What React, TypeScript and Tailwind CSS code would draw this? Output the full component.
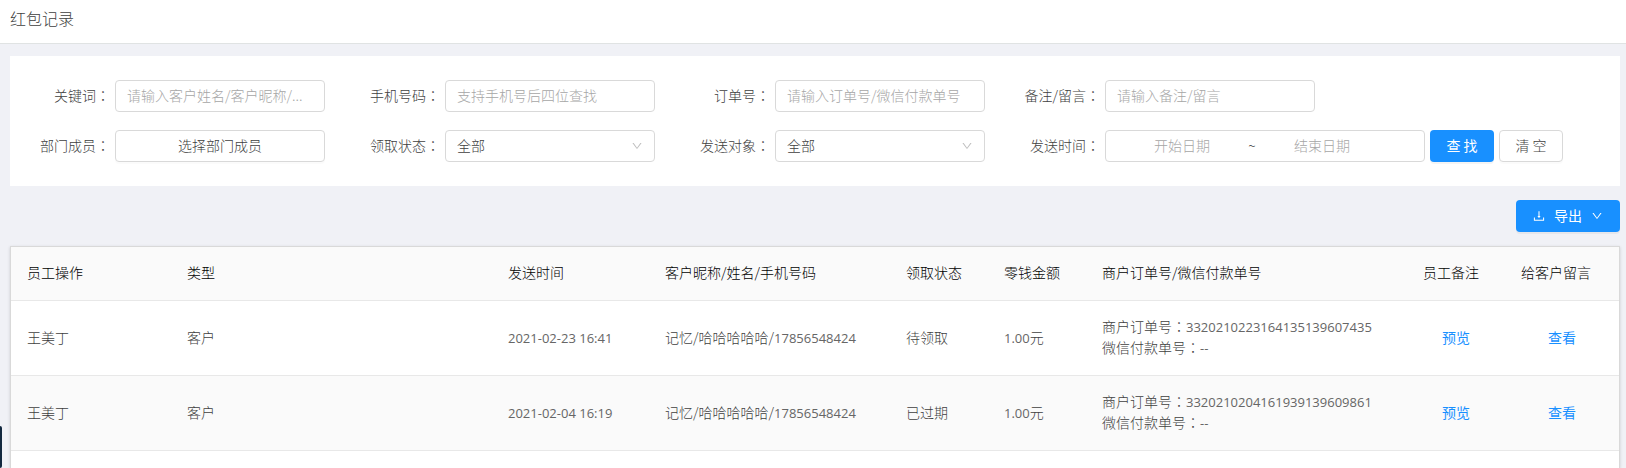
import React from "react";
import { AiOutlineDown, AiOutlineDownload } from "react-icons/ai";

const fieldBox =
  "h-8 pb-[2px] rounded border border-[#d9d9d9] bg-white text-[#404040] outline-none focus:border-[#40a9ff]";

const cell = "px-4 pt-[15px] pb-[17px]";

const records = [
  {
    staff: "王美丁",
    type: "客户",
    time: "2021-02-23 16:41",
    nickname: "记忆/哈哈哈哈哈/",
    phone: "17856548424",
    status: "待领取",
    amount: "1.00",
    orderNo: "3320210223164135139607435",
    payNo: "--",
  },
  {
    staff: "王美丁",
    type: "客户",
    time: "2021-02-04 16:19",
    nickname: "记忆/哈哈哈哈哈/",
    phone: "17856548424",
    status: "已过期",
    amount: "1.00",
    orderNo: "3320210204161939139609861",
    payNo: "--",
  },
];

const columns = [
  { title: "员工操作", width: "w-[160px]" },
  { title: "类型", width: "w-[321px]" },
  { title: "发送时间", width: "w-[157px]" },
  { title: "客户昵称/姓名/手机号码", width: "w-[241px]" },
  { title: "领取状态", width: "w-[98px]" },
  { title: "零钱金额", width: "w-[98px]" },
  { title: "商户订单号/微信付款单号", width: "w-[321px]" },
  { title: "员工备注", width: "w-[98px]" },
  { title: "给客户留言", width: "w-[114px]" },
];

// Full-width colon, centred in its em box
const Colon = () => (
  <span className="font-['Noto_Sans_CJK_TC',sans-serif] leading-none">：</span>
);

const Num = ({ children }: { children: React.ReactNode }) => (
  <span className="font-['Open_Sans',sans-serif] text-[13px] leading-none font-normal text-[#666666]">
    {children}
  </span>
);

const Field = ({
  label,
  id,
  children,
}: {
  label: string;
  id: string;
  children: React.ReactNode;
}) => (
  <div className="flex items-center">
    <label htmlFor={id} className="w-[100px] mr-[5px] pb-[2px] text-right whitespace-nowrap">
      {label}
      <Colon />
    </label>
    {children}
  </div>
);

const TextField = ({
  label,
  id,
  placeholder,
}: {
  label: string;
  id: string;
  placeholder: string;
}) => (
  <Field label={label} id={id}>
    <input
      id={id}
      type="text"
      placeholder={placeholder}
      className={`${fieldBox} w-[210px] mr-[15px] px-[11px] placeholder:text-[#a6a6a6]`}
    />
  </Field>
);

const SelectField = ({ label, id }: { label: string; id: string }) => (
  <Field label={label} id={id}>
    <div className="relative w-[210px] mr-[15px]">
      <select id={id} className={`${fieldBox} block w-full appearance-none pl-[11px] pr-8`}>
        <option>全部</option>
      </select>
      <AiOutlineDown className="absolute right-3 top-[10px] w-3 h-3 text-[#bfbfbf] pointer-events-none" />
    </div>
  </Field>
);

const Filters = () => (
  <form className="bg-white py-6 space-y-[18px]" onSubmit={(e) => e.preventDefault()}>
    <div className="flex flex-wrap gap-y-[18px]">
      <TextField label="关键词" id="keyword" placeholder="请输入客户姓名/客户昵称/..." />
      <TextField label="手机号码" id="phone" placeholder="支持手机号后四位查找" />
      <TextField label="订单号" id="order" placeholder="请输入订单号/微信付款单号" />
      <TextField label="备注/留言" id="remark" placeholder="请输入备注/留言" />
    </div>
    <div className="flex flex-wrap gap-y-[18px]">
      <Field label="部门成员" id="member">
        <button
          id="member"
          type="button"
          className={`${fieldBox} w-[210px] mr-[15px] shadow-[0_2px_0_rgba(0,0,0,0.015)]`}
        >
          选择部门成员
        </button>
      </Field>
      <SelectField label="领取状态" id="status" />
      <SelectField label="发送对象" id="target" />
      <Field label="发送时间" id="start">
        <div className={`${fieldBox} flex items-center w-[320px] pl-[11px] pr-[37px]`}>
          <input
            id="start"
            type="text"
            placeholder="开始日期"
            className="flex-1 min-w-0 text-center outline-none placeholder:text-[#a6a6a6]"
          />
          <span className="w-[10px] text-center">~</span>
          <input
            type="text"
            aria-label="结束日期"
            placeholder="结束日期"
            className="flex-1 min-w-0 text-center outline-none placeholder:text-[#a6a6a6]"
          />
        </div>
      </Field>
      <button
        type="submit"
        className="w-16 h-8 ml-[5px] pb-[2px] rounded bg-[#1890ff] font-normal text-white shadow-[0_2px_0_rgba(0,0,0,0.045)]"
      >
        查 找
      </button>
      <button
        type="reset"
        className={`${fieldBox} w-16 ml-[5px] shadow-[0_2px_0_rgba(0,0,0,0.015)]`}
      >
        清 空
      </button>
    </div>
  </form>
);

const RecordTable = () => (
  <div className="flex-1 bg-white border border-b-0 border-[#d9d9d9] shadow-[0_1px_3px_rgba(0,0,0,0.15)]">
    <table className="w-full table-fixed">
      <thead className="bg-[#fafafa] text-black">
        <tr className="border-b border-[#e8e8e8]">
          {columns.map((col) => (
            <th
              key={col.title}
              className={`${col.width} ${cell} text-left font-light whitespace-nowrap`}
            >
              {col.title}
            </th>
          ))}
        </tr>
      </thead>
      <tbody>
        {records.map((item, index) => (
          <tr key={index} className="border-b border-[#e8e8e8] even:bg-[#fafafa]">
            <td className={cell}>{item.staff}</td>
            <td className={cell}>{item.type}</td>
            <td className={`${cell} whitespace-nowrap`}>
              <Num>{item.time}</Num>
            </td>
            <td className={cell}>
              {item.nickname}
              <Num>{item.phone}</Num>
            </td>
            <td className={cell}>{item.status}</td>
            <td className={cell}>
              <Num>{item.amount}</Num>元
            </td>
            <td className={cell}>
              <p>
                商户订单号
                <Colon />
                <Num>{item.orderNo}</Num>
              </p>
              <p>
                微信付款单号
                <Colon />
                <Num>{item.payNo}</Num>
              </p>
            </td>
            <td className={`${cell} text-center`}>
              <a href="#" className="font-normal text-[#1890ff]">
                预览
              </a>
            </td>
            <td className={`${cell} text-center`}>
              <a href="#" className="font-normal text-[#1890ff]">
                查看
              </a>
            </td>
          </tr>
        ))}
      </tbody>
    </table>
  </div>
);

const App = () => {
  return (
    <div className="min-h-screen flex flex-col bg-[#f0f1f6] text-[#404040] text-sm leading-[21px] font-light font-['Noto_Sans_CJK_SC',sans-serif]">
      <header className="h-11 flex items-center bg-white border-b border-[#e0e3e3] px-[10px] pb-[7px]">
        <h1 className="text-base">红包记录</h1>
      </header>

      <main className="flex-1 flex flex-col pt-3 pl-[10px] pr-[6px]">
        <Filters />

        <div className="flex justify-end py-[14px]">
          <button
            type="button"
            className="flex items-center gap-2 h-8 px-4 rounded bg-[#1890ff] font-normal text-white shadow-[0_2px_0_rgba(0,0,0,0.045)]"
          >
            <AiOutlineDownload className="w-3.5 h-3.5" />
            <span className="pb-[2px]">导出</span>
            <AiOutlineDown className="w-3 h-3 mx-px" />
          </button>
        </div>

        <RecordTable />
      </main>

      {/* Collapsed side drawer handle */}
      <div className="fixed left-0 bottom-0 w-[2px] h-[42px] rounded-r-sm bg-[#12283f]" />
    </div>
  );
};

export default App;
